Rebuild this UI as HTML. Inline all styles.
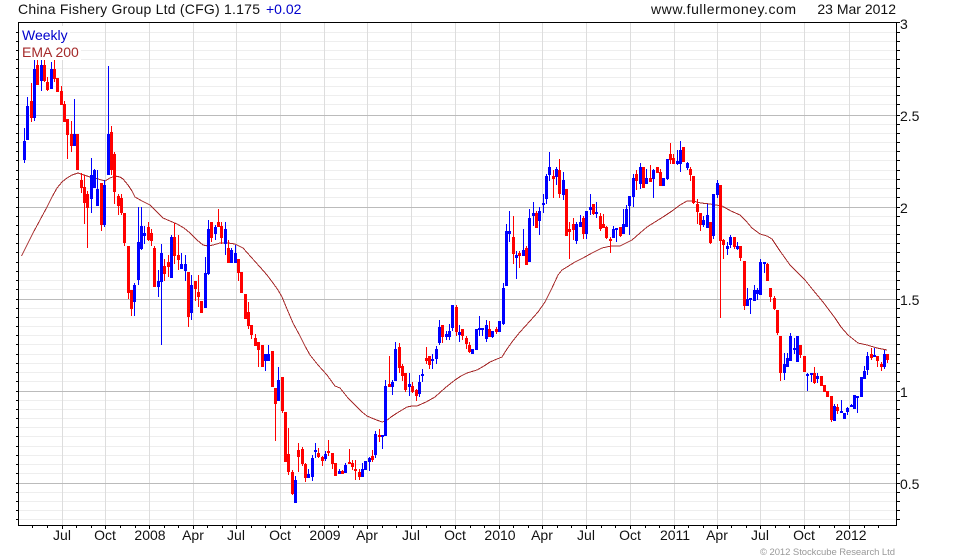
<!DOCTYPE html>
<html><head><meta charset="utf-8"><title>China Fishery Group Ltd</title>
<style>html,body{margin:0;padding:0;background:#fff;width:980px;height:560px;overflow:hidden}svg{display:block}text{font-family:"Liberation Sans",Arial,sans-serif;font-size:14px;fill:#111}</style></head>
<body>
<svg width="980" height="560" viewBox="0 0 980 560" xmlns="http://www.w3.org/2000/svg">
<g shape-rendering="crispEdges" fill="none">
<path stroke="#eee" d="M19 32.5H896M19 41.5H896M19 50.5H896M19 59.5H896M19 68.5H896M19 77.5H896M19 86.5H896M19 95.5H896M19 104.5H896M19 124.5H896M19 133.5H896M19 142.5H896M19 151.5H896M19 160.5H896M19 170.5H896M19 179.5H896M19 188.5H896M19 197.5H896M19 216.5H896M19 225.5H896M19 234.5H896M19 243.5H896M19 252.5H896M19 262.5H896M19 271.5H896M19 280.5H896M19 289.5H896M19 308.5H896M19 317.5H896M19 326.5H896M19 335.5H896M19 344.5H896M19 354.5H896M19 363.5H896M19 372.5H896M19 381.5H896M19 400.5H896M19 409.5H896M19 418.5H896M19 427.5H896M19 436.5H896M19 446.5H896M19 455.5H896M19 464.5H896M19 473.5H896M19 492.5H896M19 501.5H896M19 510.5H896M19 519.5H896"/>
<path stroke="#ddd" d="M62.5 23V525M105.5 23V525M149.5 23V525M193.5 23V525M236.5 23V525M280.5 23V525M324.5 23V525M367.5 23V525M411.5 23V525M455.5 23V525M499.5 23V525M542.5 23V525M586.5 23V525M630.5 23V525M674.5 23V525M717.5 23V525M760.5 23V525M804.5 23V525M849.5 23V525"/>
<path stroke="#bbb" d="M19 115.5H896M19 207.5H896M19 299.5H896M19 391.5H896M19 483.5H896"/>
<rect x="20" y="26" width="50" height="17" fill="#fff"/>
<rect x="20" y="43" width="61" height="17" fill="#fff"/>
</g>
<polyline fill="none" stroke="#a52a2a" stroke-width="1" shape-rendering="crispEdges" points="21.5,256 27,245 33,233 40,220 47,207 52,197 57,188 62,182 67,178 72,175 78,173 84,175 90,177 98,179 105,181 110,178 115,176 120,177 123,179 128,185 132,191 135,197 142,201 150,205 156,211 163,218 170,221 177,224 184,228 190,233 197,240 203,245 208,246 213,245 220,243 228,243 235,244 243,248 251,257 260,267 267,275 273,283 278,290 282,297 287,309 293,323 300,336 305,346 310,355 318,365 327,375 335,386 340,388 348,398 357,407 362,412 367,416 374,419 382,422 386,421 391,417 397,413 402,410 407,407 412,406 417,406 426,402 435,397 445,388 455,380 461,376 467,373 477,370 484,366 490,362 497,359 502,357 507,349 512,342 520,332 530,321 538,312 545,302 552,288 558,275 562,270 567,267 575,262 583,258 592,253 602,248 611,246 620,246 632,240 640,233 647,227 655,222 663,217 672,211 680,205 687,201 693,201 701,203 710,204 722,206 731,211 740,215 746,221 752,228 760,234 767,236 772,239 780,251 790,265 797,272 805,280 813,290 823,302 835,318 841,327 848,335 853,339 858,343 867,345 877,348 887,350"/>
<g shape-rendering="crispEdges" fill="none">
<path stroke="#00f" stroke-width="1" d="M24.5 128V163M27.5 97V140M34.5 60V121M41.5 60V91M51.5 62V89M74.5 99V146M91.5 158V213M94.5 169V188M97.5 170V206M104.5 180V227M108.5 66V175M134.5 283V316M138.5 207V285M141.5 207V250M144.5 226V244M158.5 270V297M161.5 244V345M171.5 235V278M181.5 253V269M185.5 255V281M191.5 275V320M205.5 257V308M208.5 220V275M215.5 225V240M225.5 222V255M231.5 248V263M235.5 245V263M265.5 354V371M268.5 345V361M278.5 367V401M295.5 476V503M308.5 469V478M312.5 455V481M315.5 443V458M325.5 451V461M339.5 469V474M345.5 463V473M362.5 463V477M365.5 461V470M369.5 457V471M375.5 431V458M382.5 435V449M385.5 380V436M392.5 380V395M395.5 342V381M409.5 373V396M419.5 375V397M422.5 369V382M432.5 354V369M436.5 346V364M439.5 320V345M446.5 331V340M449.5 324V340M452.5 305V331M459.5 325V342M472.5 349V354M476.5 329V350M479.5 316V336M482.5 328V336M486.5 320V342M492.5 331V338M499.5 321V332M503.5 283V325M506.5 224V286M509.5 211V242M516.5 251V279M523.5 229V256M529.5 209V262M533.5 202V226M539.5 207V235M543.5 194V213M546.5 174V204M549.5 152V181M556.5 167V185M563.5 172V200M576.5 222V244M580.5 215V227M586.5 211V239M590.5 194V215M596.5 202V218M613.5 226V238M616.5 228V242M623.5 209V234M626.5 205V227M629.5 196V235M633.5 174V207M640.5 163V189M646.5 169V184M653.5 169V198M663.5 178V186M667.5 159V180M677.5 150V165M680.5 141V172M687.5 162V170M703.5 216V227M707.5 204V228M713.5 194V239M717.5 180V198M727.5 242V255M730.5 235V248M737.5 242V250M747.5 288V306M750.5 298V314M754.5 285V301M757.5 288V300M760.5 259V295M764.5 262V273M784.5 353V380M787.5 353V367M790.5 333V361M794.5 338V354M797.5 336V362M807.5 373V391M811.5 373V382M817.5 373V383M834.5 404V421M841.5 400V413M844.5 413V419M847.5 407V415M851.5 404V407M854.5 395V409M857.5 396V413M861.5 377V397M864.5 366V379M867.5 352V375M874.5 348V357M884.5 350V369"/>
<path stroke="#00f" stroke-width="3" d="M24.5 141V160M27.5 106V140M34.5 69V118M41.5 65V81M51.5 69V89M74.5 134V146M91.5 175V199M94.5 170V188M97.5 189V206M104.5 185V225M108.5 134V175M134.5 285V302M138.5 242V280M141.5 226V249M144.5 233V236M158.5 281V287M161.5 253V282M171.5 237V278M181.5 264V269M185.5 264V271M191.5 285V313M205.5 273V308M208.5 229V274M215.5 227V234M225.5 229V244M231.5 250V263M235.5 253V263M265.5 354V361M268.5 354V361M278.5 380V401M295.5 480V503M308.5 474V478M312.5 458V477M315.5 450V452M325.5 454V459M339.5 471V474M345.5 465V473M362.5 469V477M365.5 461V470M369.5 458V462M375.5 434V455M382.5 435V437M385.5 386V436M392.5 382V387M395.5 349V381M409.5 384V387M419.5 382V394M422.5 374V376M432.5 359V361M436.5 349V359M439.5 327V343M446.5 334V337M449.5 331V337M452.5 305V328M459.5 332V335M472.5 349V354M476.5 329V350M479.5 328V330M482.5 328V330M486.5 325V339M492.5 331V337M499.5 321V332M503.5 288V324M506.5 231V286M509.5 231V234M516.5 255V258M523.5 250V256M529.5 218V262M533.5 213V216M539.5 211V221M543.5 203V205M546.5 176V199M549.5 167V175M556.5 169V177M563.5 180V195M576.5 224V241M580.5 222V227M586.5 211V234M590.5 207V210M596.5 212V214M613.5 229V238M616.5 228V230M623.5 224V234M626.5 209V227M629.5 196V206M633.5 178V197M640.5 167V184M646.5 178V184M653.5 170V179M663.5 178V186M667.5 159V179M677.5 161V164M680.5 150V164M687.5 163V168M703.5 220V225M707.5 215V228M713.5 194V236M717.5 183V195M727.5 246V249M730.5 237V245M737.5 246V249M747.5 299V306M750.5 298V300M754.5 290V301M757.5 290V294M760.5 262V295M764.5 262V264M784.5 364V373M787.5 358V367M790.5 336V361M794.5 348V350M797.5 336V362M807.5 374V376M811.5 373V375M817.5 376V379M834.5 406V421M841.5 411V413M844.5 413V419M847.5 408V412M851.5 405V407M854.5 395V409M857.5 396V398M861.5 377V397M864.5 371V379M867.5 356V370M874.5 355V357M884.5 354V367"/>
<path stroke="#f00" stroke-width="1" d="M31.5 83V122M37.5 60V85M44.5 60V82M47.5 77V91M54.5 60V82M57.5 78V92M61.5 86V105M64.5 101V122M67.5 119V159M71.5 121V152M77.5 134V170M81.5 173V193M84.5 175V224M87.5 191V248M101.5 183V231M111.5 126V175M114.5 152V204M118.5 194V215M121.5 194V215M124.5 213V246M128.5 246V299M131.5 290V316M148.5 222V241M151.5 229V246M154.5 246V287M164.5 259V281M168.5 255V277M174.5 223V264M178.5 235V270M188.5 272V327M195.5 281V301M198.5 275V307M201.5 301V313M211.5 222V242M218.5 209V227M221.5 222V244M228.5 240V263M238.5 259V281M241.5 272V293M245.5 294V319M248.5 302V329M251.5 325V339M255.5 334V346M258.5 342V367M262.5 345V367M272.5 351V387M275.5 388V441M282.5 377V413M285.5 412V462M288.5 428V475M292.5 470V495M298.5 443V472M302.5 447V466M305.5 463V482M318.5 448V458M322.5 456V466M328.5 440V456M332.5 453V469M335.5 463V476M342.5 470V474M349.5 449V464M352.5 460V470M355.5 460V480M359.5 469V480M372.5 450V462M379.5 429V442M389.5 356V387M399.5 343V373M402.5 364V381M405.5 373V392M412.5 382V393M416.5 389V401M426.5 347V364M429.5 356V369M442.5 325V343M456.5 305V336M462.5 329V340M466.5 336V349M469.5 342V353M489.5 321V337M496.5 327V334M513.5 216V264M519.5 251V268M526.5 246V265M536.5 211V228M553.5 170V198M559.5 159V198M566.5 189V236M569.5 222V259M573.5 218V240M583.5 216V239M593.5 204V215M600.5 213V231M603.5 214V228M606.5 226V239M610.5 237V253M620.5 227V237M636.5 170V190M643.5 167V188M650.5 165V182M657.5 167V173M660.5 169V186M670.5 143V164M673.5 154V164M683.5 147V162M690.5 167V181M693.5 176V204M697.5 199V224M700.5 213V231M710.5 222V244M720.5 185V318M723.5 239V259M734.5 237V249M740.5 246V261M744.5 261V310M767.5 263V281M770.5 288V302M774.5 296V310M777.5 310V335M780.5 336V381M800.5 345V358M804.5 356V372M814.5 367V384M821.5 376V386M824.5 385V392M827.5 391V397M831.5 396V422M837.5 404V414M871.5 348V360M877.5 356V367M881.5 362V371M887.5 354V363"/>
<path stroke="#f00" stroke-width="3" d="M31.5 101V118M37.5 65V85M44.5 65V81M47.5 82V90M54.5 69V79M57.5 78V92M61.5 91V105M64.5 104V122M67.5 119V135M71.5 134V146M77.5 134V170M81.5 180V188M84.5 187V203M87.5 194V208M101.5 183V225M111.5 132V170M114.5 154V192M118.5 196V206M121.5 198V213M124.5 213V243M128.5 246V293M131.5 290V309M148.5 227V240M151.5 233V241M154.5 248V287M164.5 266V274M168.5 262V267M174.5 237V256M178.5 255V260M188.5 272V317M195.5 281V289M198.5 292V297M201.5 301V313M211.5 222V238M218.5 222V227M221.5 226V238M228.5 248V263M238.5 259V273M241.5 272V293M245.5 294V319M248.5 312V326M251.5 325V335M255.5 338V346M258.5 342V350M262.5 345V367M272.5 351V387M275.5 388V404M282.5 377V411M285.5 412V462M288.5 454V472M292.5 472V494M298.5 450V457M302.5 449V464M305.5 464V478M318.5 453V457M322.5 457V461M328.5 451V453M332.5 453V464M335.5 463V476M342.5 471V474M349.5 462V464M352.5 463V467M355.5 469V471M359.5 472V477M372.5 456V460M379.5 435V437M389.5 384V387M399.5 347V368M402.5 366V376M405.5 373V390M412.5 386V392M416.5 390V396M426.5 358V361M429.5 356V365M442.5 325V337M456.5 307V332M462.5 329V336M466.5 338V344M469.5 345V352M489.5 329V337M496.5 329V332M513.5 237V254M519.5 253V256M526.5 248V265M536.5 213V228M553.5 176V179M559.5 170V194M566.5 189V236M569.5 229V232M573.5 224V230M583.5 218V234M593.5 204V214M600.5 216V229M603.5 224V228M606.5 227V238M610.5 239V241M620.5 227V236M636.5 174V181M643.5 167V188M650.5 178V182M657.5 167V173M660.5 172V186M670.5 154V160M673.5 158V164M683.5 147V162M690.5 169V175M693.5 176V203M697.5 204V212M700.5 213V225M710.5 222V243M720.5 185V241M723.5 240V245M734.5 237V247M740.5 246V258M744.5 261V306M767.5 264V281M770.5 288V297M774.5 298V309M777.5 310V333M780.5 336V373M800.5 345V355M804.5 356V372M814.5 373V383M821.5 376V386M824.5 385V392M827.5 391V397M831.5 396V420M837.5 407V411M871.5 354V358M877.5 356V361M881.5 364V367M887.5 354V360"/>
<path stroke="#000" stroke-width="1" d="M18.5 22V526M896.5 22V526M18 22.5H897M18 525.5H897"/>
<path stroke="#000" stroke-width="1" d="M16 32.5H18M16 41.5H18M16 50.5H18M16 59.5H18M16 68.5H18M16 77.5H18M16 86.5H18M16 95.5H18M16 104.5H18M16 115.5H18M16 124.5H18M16 133.5H18M16 142.5H18M16 151.5H18M16 160.5H18M16 170.5H18M16 179.5H18M16 188.5H18M16 197.5H18M16 207.5H18M16 216.5H18M16 225.5H18M16 234.5H18M16 243.5H18M16 252.5H18M16 262.5H18M16 271.5H18M16 280.5H18M16 289.5H18M16 299.5H18M16 308.5H18M16 317.5H18M16 326.5H18M16 335.5H18M16 344.5H18M16 354.5H18M16 363.5H18M16 372.5H18M16 381.5H18M16 391.5H18M16 400.5H18M16 409.5H18M16 418.5H18M16 427.5H18M16 436.5H18M16 446.5H18M16 455.5H18M16 464.5H18M16 473.5H18M16 483.5H18M16 492.5H18M16 501.5H18M16 510.5H18M16 519.5H18"/>
<path stroke="#000" stroke-width="1" d="M897 22.5H900M897 32.5H900M897 41.5H900M897 50.5H900M897 59.5H900M897 68.5H900M897 77.5H900M897 86.5H900M897 95.5H900M897 104.5H900M897 115.5H900M897 124.5H900M897 133.5H900M897 142.5H900M897 151.5H900M897 160.5H900M897 170.5H900M897 179.5H900M897 188.5H900M897 197.5H900M897 207.5H900M897 216.5H900M897 225.5H900M897 234.5H900M897 243.5H900M897 252.5H900M897 262.5H900M897 271.5H900M897 280.5H900M897 289.5H900M897 299.5H900M897 308.5H900M897 317.5H900M897 326.5H900M897 335.5H900M897 344.5H900M897 354.5H900M897 363.5H900M897 372.5H900M897 381.5H900M897 391.5H900M897 400.5H900M897 409.5H900M897 418.5H900M897 427.5H900M897 436.5H900M897 446.5H900M897 455.5H900M897 464.5H900M897 473.5H900M897 483.5H900M897 492.5H900M897 501.5H900M897 510.5H900M897 519.5H900"/>
<path stroke="#000" stroke-width="1" d="M32.5 526V528M47.5 526V528M62.5 526V529M76.5 526V528M91.5 526V528M105.5 526V529M120.5 526V528M135.5 526V528M149.5 526V529M164.5 526V528M178.5 526V528M193.5 526V529M207.5 526V528M222.5 526V528M236.5 526V529M251.5 526V528M265.5 526V528M280.5 526V529M295.5 526V528M309.5 526V528M324.5 526V529M338.5 526V528M353.5 526V528M367.5 526V529M382.5 526V528M396.5 526V528M411.5 526V529M426.5 526V528M440.5 526V528M455.5 526V529M470.5 526V528M484.5 526V528M499.5 526V529M513.5 526V528M528.5 526V528M542.5 526V529M557.5 526V528M571.5 526V528M586.5 526V529M601.5 526V528M615.5 526V528M630.5 526V529M645.5 526V528M659.5 526V528M674.5 526V529M688.5 526V528M703.5 526V528M717.5 526V529M731.5 526V528M746.5 526V528M760.5 526V529M775.5 526V528M789.5 526V528M804.5 526V529M819.5 526V528M834.5 526V528M849.5 526V529M864.5 526V528M878.5 526V528"/>
</g>
<text x="18" y="14" textLength="242" lengthAdjust="spacing">China Fishery Group Ltd (CFG) 1.175</text>
<text x="266" y="14" style="fill:#0000cc">+0.02</text>
<text x="651" y="14" textLength="145" lengthAdjust="spacing">www.fullermoney.com</text>
<text x="896" y="14" text-anchor="end">23 Mar 2012</text>
<text x="22" y="40" style="fill:#0000cc">Weekly</text>
<text x="22" y="57" style="fill:#a52a2a">EMA 200</text>
<text x="900" y="29">3</text>
<text x="900" y="121">2.5</text>
<text x="900" y="213">2</text>
<text x="900" y="305">1.5</text>
<text x="900" y="397">1</text>
<text x="900" y="489">0.5</text>
<g text-anchor="middle">
<text x="62" y="540">Jul</text>
<text x="105" y="540">Oct</text>
<text x="150" y="540">2008</text>
<text x="193" y="540">Apr</text>
<text x="236" y="540">Jul</text>
<text x="280" y="540">Oct</text>
<text x="325" y="540">2009</text>
<text x="367" y="540">Apr</text>
<text x="411" y="540">Jul</text>
<text x="455" y="540">Oct</text>
<text x="500" y="540">2010</text>
<text x="542" y="540">Apr</text>
<text x="586" y="540">Jul</text>
<text x="630" y="540">Oct</text>
<text x="675" y="540">2011</text>
<text x="717" y="540">Apr</text>
<text x="760" y="540">Jul</text>
<text x="804" y="540">Oct</text>
<text x="851" y="540">2012</text>
</g>
<text x="760" y="555" textLength="135" lengthAdjust="spacing" style="font-size:9.5px;fill:#999">© 2012 Stockcube Research Ltd</text>
</svg>
</body></html>
